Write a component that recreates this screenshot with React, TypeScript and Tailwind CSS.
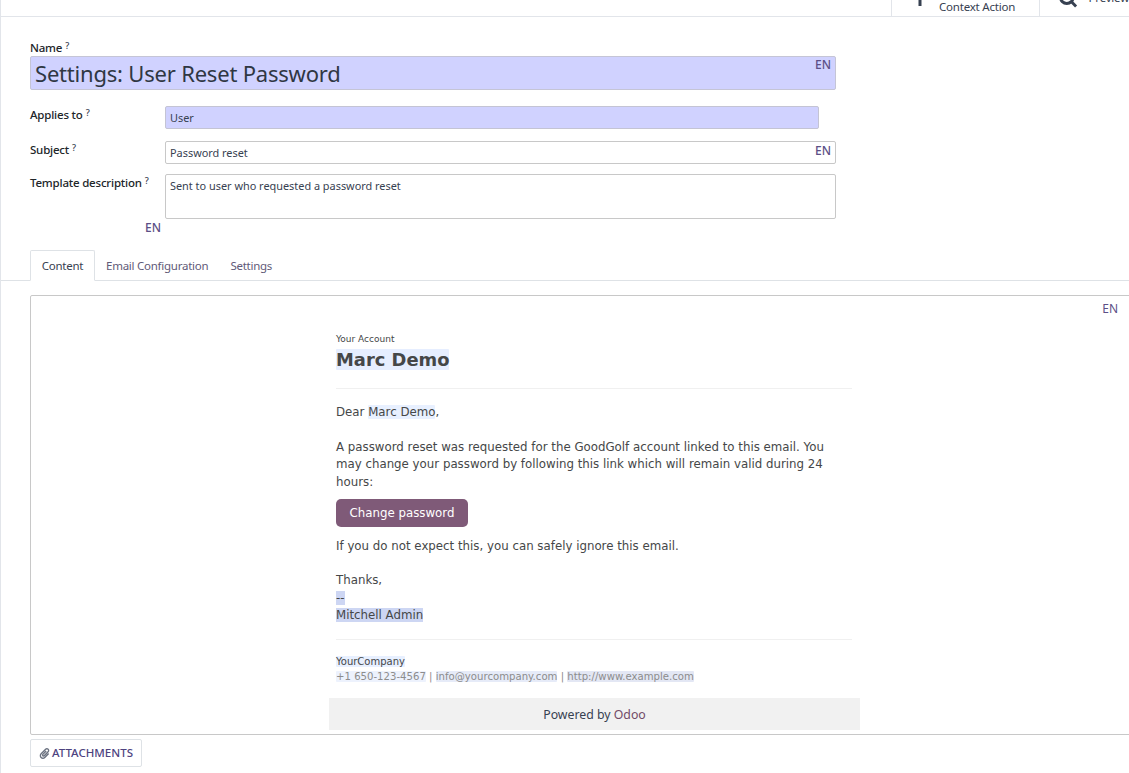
import { FaPaperclip } from 'react-icons/fa';

const sans = 'font-["Noto_Sans",sans-serif]';

function Help() {
  return <sup className="ml-[3px] text-[9px] leading-none text-[#374151] relative -top-[3px] align-baseline">?</sup>;
}

function En({ className = '' }: { className?: string }) {
  return <span className={`text-[12px] leading-none font-medium text-[#5c4f86] ${className}`}>EN</span>;
}

function FieldRow({ label, children, className = '' }: { label: string; children: React.ReactNode; className?: string }) {
  return (
    <div className={`flex ${className}`}>
      <div className="w-[135px] shrink-0 pt-[1px] text-[11.500px] font-medium leading-[16px] tracking-[-0.2px] text-[#212529]">
        {label}
        <Help />
      </div>
      {children}
    </div>
  );
}

export default function App() {
  return (
    <div className={`h-[773px] w-[1129px] overflow-hidden border-l border-[#e2e5ea] bg-white text-[#374151] ${sans}`}>
      {/* clipped control panel */}
      <div className="flex h-[17px] justify-end overflow-hidden border-b border-[#e2e5ea]">
        <div className="flex h-full w-[148px] items-end border-l border-[#e2e5ea] pl-[24px]">
          <svg width="8" height="6" viewBox="0 0 8 6" className="mb-[10px]">
            <rect x="2.500" y="0" width="3" height="6" fill="#374151" />
          </svg>
          <span className="ml-[15px] mb-[3px] text-[11.500px] leading-[12px] tracking-[-0.2px] text-[#374151]">Context Action</span>
        </div>
        <div className="flex h-full w-[90px] items-end border-l border-[#e2e5ea] pl-[18px]">
          <svg width="20" height="10" viewBox="0 0 20 10" fill="none" stroke="#374151" strokeWidth="3" className="mb-[8px]">
            <circle cx="9" cy="-1" r="6.500" />
            <path d="M13.500 3.500l5 5" />
          </svg>
          <span className="ml-[11px] mb-[12px] text-[11.500px] leading-[12px] tracking-[-0.2px]">Preview</span>
        </div>
      </div>

      <div className="px-[29px]">
        <div className="mt-[23px] h-[16px] text-[11.500px] font-medium leading-[16px] tracking-[-0.2px] text-[#212529]">
          Name
          <Help />
        </div>
        <div className="flex h-[34px] w-[806px] justify-between rounded-[2px] border border-[#c5c5d6] bg-[#d0d2ff] pl-[4px] pr-[4px]">
          <span className="text-[22px] leading-[32px] tracking-[-0.2px] text-[#2f3743]">Settings: User Reset Password</span>
          <En className="mt-[2px]" />
        </div>

        <FieldRow label="Applies to" className="mt-[16px]">
          <div className="flex h-[23px] w-[654px] items-center rounded-[2px] border border-[#c4c4d4] bg-[#d0d2ff] pl-[4px] pt-[1px] text-[10.900px]">User</div>
        </FieldRow>
        <FieldRow label="Subject" className="mt-[12px]">
          <div className="flex h-[23px] w-[671px] items-center justify-between rounded-[2px] border border-[#c8c8c8] pl-[4px] pr-[4px] pt-[1px] text-[10.900px]">
            Password reset
            <En className="-mt-[5px]" />
          </div>
        </FieldRow>
        <FieldRow label="Template description" className="mt-[10px]">
          <div className="h-[45px] w-[671px] rounded-[2px] border border-[#c8c8c8] pl-[4px] pt-[3px] text-[10.900px] leading-[16px]">
            Sent to user who requested a password reset
          </div>
        </FieldRow>
        <div className="mt-[3px] flex h-[12px] w-[131px] justify-end">
          <En />
        </div>
      </div>

      {/* tabs */}
      <div className="mt-[16px] flex h-[31px] items-end border-b border-[#dee2e6] pl-[29px] text-[11.500px] tracking-[-0.25px]">
        <div className="-mb-px flex h-[31px] w-[65px] items-center justify-center rounded-t-[2px] border border-b-white border-[#dee2e6] bg-white pt-[1px] text-[#374151]">Content</div>
        <div className="flex h-[30px] items-center px-[11px] pt-[1px] text-[#5f5a78]">Email Configuration</div>
        <div className="flex h-[30px] items-center px-[11px] pt-[1px] text-[#5f5a78]">Settings</div>
      </div>

      <div className="ml-[29px] mt-[14px] h-[440px] w-[1110px] rounded-tl-[2px] rounded-bl-[2px] border border-[#c8c8c8]">
        <div className="flex justify-end pr-[21px] pt-[7px]">
          <En className="!font-normal" />
        </div>
        <div className="ml-[298px] mt-[-1px] w-[531px] font-['DejaVu_Sans',sans-serif] text-[11.800px] leading-[17.500px] text-[#454748]">
          <div className="px-[7px] pt-[18px]">
            <div className="text-[9px] leading-[14px] text-[#454748]">Your Account</div>
            <div className="mt-[3px]"><span className="rounded-[1px] bg-[#e6eeff] text-[17.900px] font-bold leading-[22px] text-[#454748]">Marc Demo</span></div>
            <div className="mb-[15px] mt-[16px] h-px w-[516px] bg-[#f0f0f0]" />
            <div>Dear <span className="rounded-[1px] bg-[#e8f0ff]">Marc Demo</span>,</div>
            <div className="mt-[17.500px] w-[516px]">
              A password reset was requested for the GoodGolf account linked to this email. You may change your password by following this link which will remain valid during 24 hours:
            </div>
            <div className="mt-[8px] flex h-[28px] w-[132px] items-center justify-center rounded-[5px] bg-[#7f5a78] pt-[2px] text-[11.800px] font-medium text-white">Change password</div>
            <div className="mt-[11px]">If you do not expect this, you can safely ignore this email.</div>
            <div className="mt-[16.500px]">Thanks,</div>
            <div><span className="bg-[#cdd6f3]">--</span></div>
            <div><span className="bg-[#cdd6f3]">Mitchell Admin</span></div>
            <div className="mb-[15px] mt-[14.500px] h-px w-[516px] bg-[#f0f0f0]" />
            <div className="text-[10px] leading-[14px]"><span className="rounded-[1px] bg-[#e8f0ff]">YourCompany</span></div>
            <div className="text-[10.150px] leading-[15px] text-[#8c8c8c]">
              <span className="rounded-[1px] bg-[#edf2fd]">+1 650-123-4567</span> | <span className="rounded-[1px] bg-[#e6ebf8]">info@yourcompany.com</span> | <span className="rounded-[1px] bg-[#e3e7f4]">http://www.example.com</span>
            </div>
          </div>
          <div className={`mt-[14px] flex h-[32px] items-center justify-center bg-[#f1f1f1] pt-[2px] ${sans} text-[12.300px] text-[#374151]`}>
            Powered by&nbsp;<span className="text-[#714b67]">Odoo</span>
          </div>
        </div>
      </div>

      <div className="ml-[29px] mt-[4px] flex h-[28px] w-[112px] items-center justify-center rounded-[2px] border border-[#dee2e6] text-[11.500px] font-medium text-[#4d4380]">
        <FaPaperclip size={11} className="mr-[2px] text-[#6b7280]" />
        ATTACHMENTS
      </div>
    </div>
  );
}
